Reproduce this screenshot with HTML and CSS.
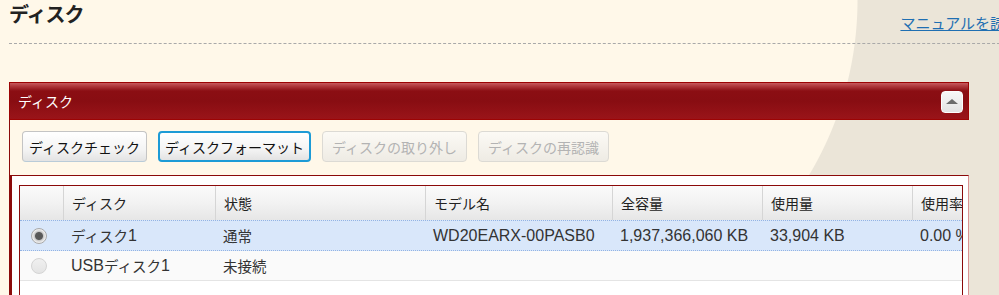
FILE: index.html
```html
<!DOCTYPE html>
<html lang="ja">
<head>
<meta charset="utf-8">
<title>ディスク</title>
<link rel="stylesheet" href="styles.css">
</head>
<body>
<div class="page">
  <div class="top">
    <h1 class="title">ディスク</h1>
    <a class="manual" href="#">マニュアルを読む</a>
  </div>
  <section class="panel">
    <div class="panel-head">
      <span class="panel-title">ディスク</span>
      <button class="collapse" type="button" aria-label="折りたたむ"><span class="tri"></span></button>
    </div>
    <div class="panel-body">
      <div class="toolbar">
        <button class="btn" type="button">ディスクチェック</button>
        <button class="btn focus" type="button">ディスクフォーマット</button>
        <button class="btn wide" type="button" disabled>ディスクの取り外し</button>
        <button class="btn wide" type="button" disabled>ディスクの再認識</button>
      </div>
      <div class="content">
        <div class="grid">
          <div class="row head">
            <div class="cell"></div>
            <div class="cell">ディスク</div>
            <div class="cell">状態</div>
            <div class="cell">モデル名</div>
            <div class="cell">全容量</div>
            <div class="cell">使用量</div>
            <div class="cell">使用率</div>
          </div>
          <div class="row data sel">
            <div class="cell radio-cell"><span class="radio on"></span></div>
            <div class="cell"><span class="j">ディスク</span>1</div>
            <div class="cell"><span class="j">通常</span></div>
            <div class="cell">WD20EARX-00PASB0</div>
            <div class="cell">1,937,366,060 KB</div>
            <div class="cell">33,904 KB</div>
            <div class="cell">0.00 %</div>
          </div>
          <div class="row data plain">
            <div class="cell radio-cell"><span class="radio"></span></div>
            <div class="cell">USB<span class="j">ディスク</span>1</div>
            <div class="cell"><span class="j">未接続</span></div>
            <div class="cell"></div>
            <div class="cell"></div>
            <div class="cell"></div>
            <div class="cell"></div>
          </div>
        </div>
      </div>
    </div>
  </section>
</div>
</body>
</html>
```

FILE: styles.css
```css
html, body {
  margin: 0;
  padding: 0;
  overflow: hidden;
}

body {
  width: 999px;
  height: 295px;
  font-family: "Liberation Sans", "Noto Sans CJK JP", sans-serif;
  background:
    radial-gradient(circle 341px at 517px 0, #fff8e9 340px, rgba(255, 248, 233, 0) 341px),
    linear-gradient(to right, #fff8e9 518px, #ebe5d8 518px);
}

.page {
  padding-left: 9px;
}

.top {
  display: flex;
  justify-content: space-between;
  align-items: flex-start;
  width: 1011px;
  height: 44px;
  box-sizing: border-box;
  border-bottom: 1px dashed #a9a9a9;
}

.title {
  margin: 0;
  padding-top: 2px;
  font-family: "Noto Sans CJK JP", sans-serif;
  font-size: 20px;
  letter-spacing: -1px;
  line-height: 24px;
  font-weight: bold;
  color: #222;
}

.manual {
  margin-top: 14px;
  font-family: "Noto Sans CJK JP", sans-serif;
  font-size: 15px;
  line-height: 18px;
  color: #1f6fb2;
  text-decoration: underline;
  white-space: nowrap;
}

.panel {
  margin-top: 38px;
  width: 960px;
}

.panel-head {
  height: 38px;
  box-sizing: border-box;
  border: 1px solid #9c0404;
  background: linear-gradient(#c65a5e 0, #b03a3e 3px, #8b0e13 8px, #880d12 50%, #9a1419 100%);
  display: flex;
  align-items: center;
  justify-content: space-between;
  padding: 0 5px 0 8px;
}

.panel-title {
  font-family: "Noto Sans CJK JP", sans-serif;
  font-size: 14px;
  line-height: 18px;
  color: #fff;
}

.collapse {
  width: 22px;
  height: 22px;
  box-sizing: border-box;
  padding: 0;
  margin-top: 1px;
  border: 1px solid #fdfdfd;
  border-radius: 4px;
  background: linear-gradient(#f7f7f7, #e3e3e3);
  display: flex;
  align-items: center;
  justify-content: center;
}

.tri {
  width: 0;
  height: 0;
  border-left: 6px solid transparent;
  border-right: 6px solid transparent;
  border-bottom: 5px solid #6b6b6b;
}

.panel-body {
  border-left: 1px solid #8b0a0a;
}

.toolbar {
  display: flex;
  gap: 11px;
  padding: 11px 0 13px 12px;
}

.btn {
  height: 31px;
  box-sizing: border-box;
  padding: 0 6px;
  font-family: "Noto Sans CJK JP", sans-serif;
  font-size: 14px;
  line-height: 18px;
  color: #111;
  border: 1px solid #c4c4c4;
  border-bottom-color: #b9cbd8;
  border-radius: 4px;
  background: linear-gradient(#ffffff, #f4f4f4 60%, #e3e3e3);
}

.btn.focus {
  padding: 0 5px;
  border: 2px solid #1d9bd6;
}

.btn.wide {
  padding: 0 9px;
}

.btn:disabled {
  color: #b3b3b3;
  border-color: #dcdad4;
  background: linear-gradient(#fcfaf5, #eeebe4);
}

.content {
  height: 140px;
  background: #fff;
  border-top: 1px solid #8b0a0a;
  border-left: 2px solid #8b0a0a;
  border-right: 1px solid #d99393;
  padding: 9px 5px 0 7px;
}

.grid {
  height: 130px;
  border: 1px solid #8b0a0a;
  overflow: hidden;
  background: #fff;
}

.row {
  display: grid;
  grid-template-columns: 43px 152px 210px 187px 150px 150px 150px;
  width: 1042px;
}

.cell {
  box-sizing: border-box;
  display: flex;
  align-items: center;
  padding-left: 8px;
  white-space: nowrap;
  color: #333;
  font-size: 16px;
}

.head {
  height: 34px;
  background: linear-gradient(#fbfbfb, #f1f1f1 55%, #e6e6e6);
}

.head .cell {
  font-family: "Noto Sans CJK JP", sans-serif;
  font-size: 14px;
  color: #222;
}

.head .cell + .cell {
  border-left: 1px solid #d5d5d5;
}

.j {
  font-family: "Noto Sans CJK JP", sans-serif;
  font-size: 14.5px;
  line-height: 18px;
}

.sel {
  height: 31px;
  box-sizing: border-box;
  background: #d9e7fa;
  border-top: 1px dotted #93b3e3;
  border-bottom: 1px dotted #93b3e3;
}

.plain {
  height: 30px;
  box-sizing: border-box;
  background: #fafafa;
  border-bottom: 1px solid #e4e4e4;
}

.radio-cell {
  padding-left: 11px;
}

.radio {
  width: 16px;
  height: 16px;
  box-sizing: border-box;
  border-radius: 50%;
  border: 1px solid #d4d4d4;
  background: linear-gradient(#f0f0f0, #e4e4e4);
}

.radio.on {
  border-color: #a9a9a9;
  background: radial-gradient(circle, #565656 0, #5a5a5a 3.5px, #c8c8c8 4.5px, #e6e6e6 6px, #f2f2f2 7px);
}
```
